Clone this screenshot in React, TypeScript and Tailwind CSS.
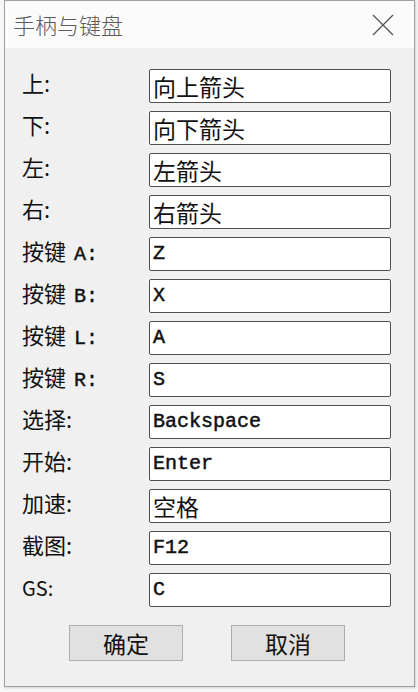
import React from "react";

const cjk = { fontFamily: '"Noto Sans CJK SC", "Noto Sans", sans-serif' };
const mono = { fontFamily: '"Liberation Mono", "Noto Sans CJK SC", monospace' };

type Row = { label: React.ReactNode; value: string; monoVal?: boolean };

const KeyLabel = ({ k }: { k: string }) => (
  <span>
    按键
    <span className="ml-[8px] text-[20px] [-webkit-text-stroke:0.4px_#111]" style={mono}>
      {k}:
    </span>
  </span>
);

const rows: Row[] = [
  { label: "上:", value: "向上箭头" },
  { label: "下:", value: "向下箭头" },
  { label: "左:", value: "左箭头" },
  { label: "右:", value: "右箭头" },
  { label: <KeyLabel k="A" />, value: "Z", monoVal: true },
  { label: <KeyLabel k="B" />, value: "X", monoVal: true },
  { label: <KeyLabel k="L" />, value: "A", monoVal: true },
  { label: <KeyLabel k="R" />, value: "S", monoVal: true },
  { label: "选择:", value: "Backspace", monoVal: true },
  { label: "开始:", value: "Enter", monoVal: true },
  { label: "加速:", value: "空格" },
  { label: "截图:", value: "F12", monoVal: true },
  { label: <span className="text-[20px]">GS:</span>, value: "C", monoVal: true },
];

export default function App() {
  return (
    <div className="w-[418px] h-[692px] bg-[#f7f7f7] pl-[4px] overflow-hidden" style={cjk}>
      <div className="w-[411px] h-[687px] border border-[#a0a0a0] bg-[#f0f0f0] flex flex-col shadow-[1px_1px_2px_rgba(0,0,0,0.15)]">
        <div className="h-[47px] bg-[#fbfbfb] flex items-center justify-between pl-[8px] pr-[20px]">
          <span className="text-[22px] text-[#5c5c5c] font-light">手柄与键盘</span>
          <svg width="22" height="22" viewBox="0 0 22 22">
            <path d="M1 1 L21 21 M21 1 L1 21" stroke="#555" strokeWidth="1.3" fill="none" />
          </svg>
        </div>
        <div className="flex flex-col gap-[8px] pt-[21px] pl-[17px]">
          {rows.map((r, i) => (
            <div key={i} className="flex items-start h-[34px]">
              <div className="w-[127px] text-[22px] leading-[26px] text-[#111]">{r.label}</div>
              <div className="w-[242px] h-[34px] border-[1.5px] border-[#505050] rounded-[2px] bg-white flex items-center pl-[3px] text-[#111]">
                {r.monoVal ? (
                  <span className="text-[20px] font-normal [-webkit-text-stroke:0.5px_#111]" style={mono}>
                    {r.value}
                  </span>
                ) : (
                  <span className="text-[23px]">{r.value}</span>
                )}
              </div>
            </div>
          ))}
        </div>
        <div className="flex gap-[48px] pl-[64px] pt-[18px]">
          <button className="w-[114px] h-[36px] bg-[#e1e1e1] border border-[#adadad] text-[23px] text-[#111] flex items-center justify-center">
            确定
          </button>
          <button className="w-[114px] h-[36px] bg-[#e1e1e1] border border-[#adadad] text-[23px] text-[#111] flex items-center justify-center">
            取消
          </button>
        </div>
      </div>
    </div>
  );
}
